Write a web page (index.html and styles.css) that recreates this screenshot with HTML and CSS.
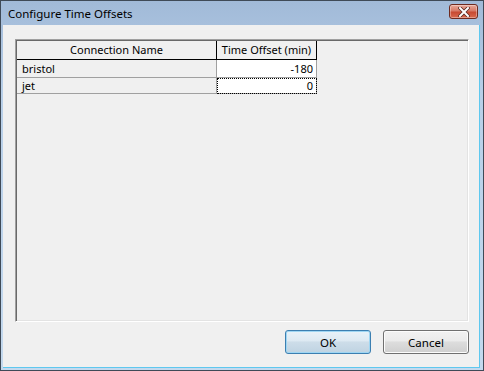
FILE: index.html
```html
<!DOCTYPE html>
<html lang="en">
<head>
    <meta charset="UTF-8">
    <title>Configure Time Offsets</title>
    <link rel="stylesheet" href="styles.css">
</head>
<body>

    <!-- Dialog Window -->
    <div class="window">
        <div class="titlebar">
            <span class="title">Configure Time Offsets</span>
            <div class="close">
                <svg width="12" height="10" viewBox="0 0 12 10">
                    <path d="M2 1 L10 9 M10 1 L2 9" stroke="#5a2a22" stroke-width="3.6" stroke-linecap="square"/>
                    <path d="M2 1 L10 9 M10 1 L2 9" stroke="#ffffff" stroke-width="2" stroke-linecap="square"/>
                </svg>
            </div>
        </div>

        <div class="client">
            <!-- Offsets Grid -->
            <div class="grid">
                <div class="row header">
                    <div class="cell name">Connection Name</div>
                    <div class="cell offset">Time Offset (min)</div>
                </div>
                <div class="row">
                    <div class="cell name">bristol</div>
                    <div class="cell offset">-180</div>
                </div>
                <div class="row last">
                    <div class="cell name">jet</div>
                    <div class="cell offset focused">0</div>
                </div>
            </div>

            <!-- Buttons -->
            <div class="buttons">
                <button class="btn default">OK</button>
                <button class="btn">Cancel</button>
            </div>
        </div>
    </div>

</body>
</html>
```

FILE: styles.css
```css
/* General */
body {
    margin: 0;
    font-family: "Noto Sans", "Open Sans", sans-serif;
    font-size: 11px;
    color: #000;
}

/* Window Frame */
.window {
    width: 484px;
    height: 371px;
    box-sizing: border-box;
    border: 1px solid #3f4a57;
    background: linear-gradient(#a1bad8, #b8cfe8 25%, #c4d9ee);
    display: flex;
    flex-direction: column;
}

.titlebar {
    height: 24px;
    display: flex;
    align-items: flex-start;
    justify-content: space-between;
    padding: 0 5px 0 7px;
}

.title {
    line-height: 26px;
    font-size: 11.5px;
}

.close {
    margin-top: 3px;
    width: 29px;
    height: 15px;
    box-sizing: border-box;
    border: 1px solid #6e2a1f;
    border-radius: 3px;
    background: linear-gradient(#e9a99a, #d67966 45%, #c74a32 55%, #d9694e);
    box-shadow: inset 0 0 0 1px rgba(255, 255, 255, 0.35);
    display: flex;
    align-items: center;
    justify-content: center;
}

.client {
    flex: 1;
    margin: 0 3px 2px 2px;
    background: #f0f0f0;
    border-right: 1px solid #5ec8ef;
    border-bottom: 1px solid #5ec8ef;
    padding: 14px 10px 12px 12px;
    display: flex;
    flex-direction: column;
}

/* Grid */
.grid {
    height: 283px;
    box-sizing: border-box;
    border-top: 1px solid #a0a0a0;
    border-left: 1px solid #a0a0a0;
    border-right: 1px solid #ffffff;
    border-bottom: 1px solid #ffffff;
    box-shadow: inset 1px 1px 0 #696969, inset -1px -1px 0 #e3e3e3;
    padding: 1px;
}

.row {
    display: flex;
    height: 18px;
}

.row.last {
    height: 16px;
}

.cell {
    box-sizing: border-box;
    border-right: 1px solid #a0a0a0;
    border-bottom: 1px solid #a0a0a0;
    padding: 0 4px 0 5px;
    line-height: 18px;
    white-space: nowrap;
}

.row.last .cell {
    line-height: 16px;
}

.cell.name {
    width: 200px;
}

.cell.offset {
    width: 100px;
    background: #fff;
    text-align: right;
    padding-right: 3px;
}

.header {
    height: 19px;
}

.header .cell {
    background: #f0f0f0;
    border-right-color: #000;
    border-bottom-color: #000;
    text-align: center;
    line-height: 18px;
    padding: 0;
}

.focused {
    outline: 1px dotted #000;
    outline-offset: -1px;
}

/* Buttons */
.buttons {
    margin-top: 8px;
    display: flex;
    justify-content: flex-end;
    gap: 12px;
}

.btn {
    width: 86px;
    height: 24px;
    font-family: inherit;
    font-size: 11.5px;
    color: #000;
    border: 1px solid #707070;
    border-radius: 3px;
    background: linear-gradient(#f2f2f2, #ebebeb 45%, #dddddd 50%, #cfcfcf);
    box-shadow: inset 0 0 0 1px #fcfcfc;
    padding: 0;
}

.btn.default {
    border-color: #3c7fb1;
    background: linear-gradient(#e8f2f9, #dde9f2 45%, #cddde9 50%, #bfd3e2);
    box-shadow: inset 0 0 0 1px #9fd6f3;
}
```
